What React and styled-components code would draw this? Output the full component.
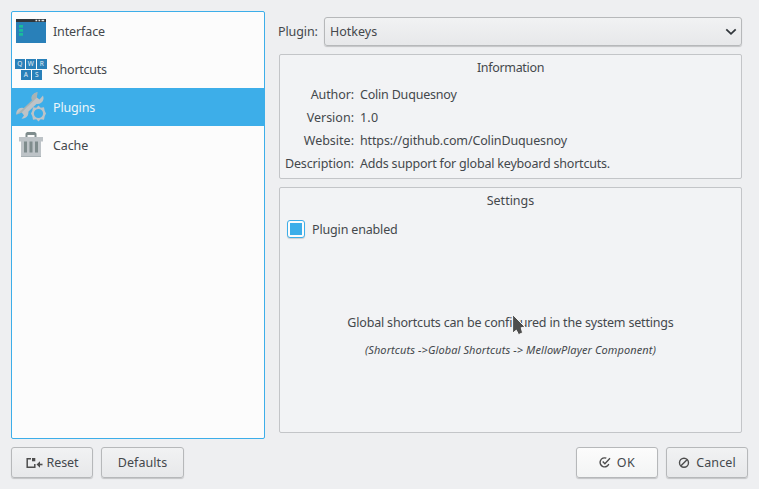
import React from "react";
import styled, { createGlobalStyle, css } from "styled-components";

const GlobalStyle = createGlobalStyle`
  * { box-sizing: border-box; }
  body {
    margin: 0;
    background: #eeeff1;
    color: #44484c;
    font: 12.5px/20px "Noto Sans", "Open Sans", sans-serif;
    overflow: hidden;
  }
`;

const Dialog = styled.main`
  width: 759px;
  height: 489px;
  padding: 11px;
  display: flex;
  flex-direction: column;
  gap: 8px;
`;

const Content = styled.div`
  display: flex;
  height: 428px;
  gap: 13px;
`;

const CategoryList = styled.nav`
  width: 254px;
  height: 428px;
  flex: none;
  background: #fcfcfc;
  border: 1px solid #3daee9;
  border-radius: 2px;
`;

const Category = styled.div`
  display: flex;
  align-items: center;
  gap: 6px;
  height: 38px;
  padding-left: 3px;
  background: ${(p) => (p.$selected ? "#3daee9" : "transparent")};
  color: ${(p) => (p.$selected ? "#eef6fa" : "inherit")};
  svg { flex: none; display: block; }
  span { padding-top: 2px; }
`;

const Text = styled.span`
  white-space: nowrap;
  letter-spacing: ${(p) => p.$spacing || 0}px;
`;

const Page = styled.section`
  width: 464px;
  padding-top: 6px;
  display: flex;
  flex-direction: column;
`;

const PluginRow = styled.div`
  display: flex;
  justify-content: space-between;
  align-items: center;
  height: 29px;
`;

const raised = css`
  border: 1px solid #b6b8ba;
  border-radius: 3px;
  background: linear-gradient(#f1f2f3, #e7e8ea);
  box-shadow: 0 1px 1px rgba(0, 0, 0, 0.18);
`;

const ComboBox = styled.div`
  ${raised}
  width: 418px;
  height: 29px;
  padding: 0 4px 0 5px;
  display: flex;
  align-items: center;
  justify-content: space-between;
`;

const Group = styled.section`
  width: 463px;
  height: ${(p) => p.$height}px;
  margin: 8px 0 0 1px;
  padding-top: 3px;
  border: 1px solid #c3c5c8;
  border-radius: 2px;
  background: #f2f3f5;
`;

const GroupTitle = styled.h2`
  margin: 0;
  font: inherit;
  text-align: center;
`;

const Fields = styled.dl`
  display: grid;
  grid-template-columns: 74px 1fr;
  column-gap: 6px;
  grid-auto-rows: 23px;
  margin: 5px 0 0;
  line-height: 23px;
`;

const FieldName = styled.dt`
  text-align: right;
`;

const FieldValue = styled.dd`
  margin: 0;
`;

const CheckRow = styled.div`
  display: flex;
  align-items: center;
  gap: 7px;
  height: 20px;
  margin: 8px 0 0 7px;
  ${Text} { padding-top: 2px; }
`;

const CheckBox = styled.span`
  width: 18px;
  height: 18px;
  padding: 2px;
  border: 1px solid #3daee9;
  border-radius: 3px;
  background: #fcfcfc;
  box-shadow: 0 1px 1px rgba(0, 0, 0, 0.15);
  &::before {
    content: "";
    display: block;
    width: 12px;
    height: 12px;
    background: #3daee9;
  }
`;

const Hint = styled.div`
  position: relative;
  display: flex;
  flex-direction: column;
  align-items: center;
  margin-top: 74px;
`;

const HintDetail = styled.div`
  margin-top: 7px;
  font-size: 11px;
  line-height: 19px;
  font-style: italic;
`;

const Pointer = styled.svg`
  position: absolute;
  left: 230px;
  top: 0;
`;

const ButtonBar = styled.footer`
  display: flex;
  gap: 8px;
  height: 32px;
`;

const Spacer = styled.div`
  flex: 1;
`;

const Button = styled.button`
  ${raised}
  ${(p) => p.$bright && css`background: linear-gradient(#fcfcfc, #f3f4f4);`}
  width: ${(p) => p.$width || 82}px;
  height: 31px;
  padding: 0;
  display: flex;
  align-items: center;
  justify-content: center;
  gap: ${(p) => p.$gap || 0}px;
  font: inherit;
  color: inherit;
`;

const KeyLabel = styled.text`
  font: 6.5px "Noto Sans", sans-serif;
  fill: #e4eff6;
  text-anchor: middle;
`;

const WindowIcon = () => (
  <svg width="32" height="32" viewBox="0 0 32 32">
    <path fill="#2980b9" d="M1 4h30v24H1z" />
    <path fill="#31363b" d="M1 4h30v3H1z" />
    <path fill="#e8eaeb" d="M20.5 4.7h1.7v1.5h-1.7zM23.5 4.7h1.7v1.5h-1.7zM26.5 4.7h2.7v1.5h-2.7z" />
    <path fill="#1abc9c" d="M4 10h4v2.7H4zM4 14h4v2.7H4zM4 18h4v2.7H4z" />
  </svg>
);

const KEYS = [["Q", 0, 6], ["W", 11, 6], ["R", 22, 6], ["A", 6, 17], ["S", 17, 17]];

const KeysIcon = () => (
  <svg width="32" height="32" viewBox="0 0 32 32">
    {KEYS.map(([k, x, y]) => (
      <g key={k}>
        <rect x={x} y={y} width="10" height="10" fill="#2980b9" />
        <KeyLabel x={x + 4.8} y={y + 7}>{k}</KeyLabel>
      </g>
    ))}
  </svg>
);

const ToolsIcon = () => (
  <svg width="32" height="32" viewBox="0 0 32 32">
    <path
      fill="#bdc3c7"
      d="M17 4.500Q18.800 1.500 22.500 1L21.800 6.500 24.500 8.500 28 4.500Q29.500 9 26.500 11.500 24.500 13.300 21.500 13L13.500 20.500Q13.500 25.500 10 27 8.500 27.700 6.500 27.800L9 24.500 6.800 21.500 1.200 23.800Q1 19.500 4 17.500 6 16.300 9 17L17 9.500Q16 6.500 17 4.500z"
    />
    <path fill="#95a5a6" fillOpacity=".55" d="M17 4.500Q18.800 1.500 22.500 1L21.800 6.500 17 11.500 11.500 16.500 6.800 21.500 1.200 23.800 17 9.500Q16 6.500 17 4.500z" />
    <path
      fill="#bdc3c7"
      fillRule="evenodd"
      d="m23.500 14.500 2.200 2.300 3.300-.5.700 3.500 1.300 2.700-1.300 2.700-.7 3.500-3.300-.5-2.200 2.300-2.200-2.300-3.300.5-.7-3.500L16 22.500l1.300-2.700.7-3.500 3.300.5zm0 3.400a4.600 4.600 0 1 0 0 9.200 4.600 4.600 0 0 0 0-9.200z"
    />
  </svg>
);

const TrashIcon = () => (
  <svg width="32" height="32" viewBox="0 0 32 32">
    <path fill="#7f8c8d" d="M10.500 6V4.500L12 3h8l1.500 1.500V8h-2V6h-7v2h-2z" />
    <path fill="#bdc3c7" d="M4 8h24v4.500h-2V27H6V12.500H4z" />
    <path fill="#a8b1b5" d="M6 27h20v1H6z" />
    <path fill="#7f8c8d" d="M9 12.500h3v11H9zM14.500 12.500h3v11h-3zM20 12.500h3v11h-3z" />
  </svg>
);

const ChevronIcon = () => (
  <svg width="12" height="8" viewBox="0 0 12 8" fill="none" stroke="#31363b" strokeWidth="1.800">
    <path d="m1.300 1.300 4.700 4.500 4.700-4.500" />
  </svg>
);

const ResetIcon = () => (
  <svg width="17" height="12" viewBox="0 0 17 12" fill="none" stroke="#4d4d4d">
    <path strokeWidth="1.500" d="M5 1.700H1.200v8.600h7.600V7" />
    <path fill="#4d4d4d" stroke="none" d="M6 1h3.300v3.300H6z" />
    <path strokeWidth="1.600" d="M16.500 7.500H12" />
    <path fill="#4d4d4d" stroke="none" d="M10.500 7.500 14 4.300v6.400z" />
  </svg>
);

const OkIcon = () => (
  <svg width="12" height="12" viewBox="0 0 12 12" fill="none" stroke="#4d4d4d" strokeWidth="1.400">
    <path d="M7.300 1.200A4.500 4.500 0 1 0 9.800 7" />
    <path d="m3.700 4.500 2.200 2.300L11 1.300" />
  </svg>
);

const CancelIcon = () => (
  <svg width="12" height="12" viewBox="0 0 12 12" fill="none" stroke="#4d4d4d" strokeWidth="1.400">
    <circle cx="6" cy="5.700" r="4.500" />
    <path d="m3 8.700 6-6" />
  </svg>
);

const CATEGORIES = [
  { name: "Interface", Icon: WindowIcon, spacing: -0.12 },
  { name: "Shortcuts", Icon: KeysIcon, spacing: -0.25 },
  { name: "Plugins", Icon: ToolsIcon, spacing: -0.15, selected: true },
  { name: "Cache", Icon: TrashIcon, spacing: -0.1 },
];

const FIELDS = [
  ["Author:", -0.1, "Colin Duquesnoy", -0.2],
  ["Version:", 0, "1.0", 0.2],
  ["Website:", 0, "https://github.com/ColinDuquesnoy", -0.13],
  ["Description:", -0.13, "Adds support for global keyboard shortcuts.", -0.2],
];

export default function App() {
  return (
    <>
      <GlobalStyle />
      <Dialog>
        <Content>
          <CategoryList>
            {CATEGORIES.map(({ name, Icon, spacing, selected }) => (
              <Category key={name} $selected={selected}>
                <Icon />
                <Text $spacing={spacing}>{name}</Text>
              </Category>
            ))}
          </CategoryList>
          <Page>
            <PluginRow>
              <Text $spacing={-0.1}>Plugin:</Text>
              <ComboBox>
                <Text>Hotkeys</Text>
                <ChevronIcon />
              </ComboBox>
            </PluginRow>
            <Group $height={125}>
              <GroupTitle><Text $spacing={-0.33}>Information</Text></GroupTitle>
              <Fields>
                {FIELDS.map(([name, nameSpacing, value, valueSpacing]) => (
                  <React.Fragment key={name}>
                    <FieldName><Text $spacing={nameSpacing}>{name}</Text></FieldName>
                    <FieldValue><Text $spacing={valueSpacing}>{value}</Text></FieldValue>
                  </React.Fragment>
                ))}
              </Fields>
            </Group>
            <Group $height={246}>
              <GroupTitle><Text>Settings</Text></GroupTitle>
              <CheckRow>
                <CheckBox role="checkbox" aria-checked="true" />
                <Text $spacing={-0.16}>Plugin enabled</Text>
              </CheckRow>
              <Hint>
                <Text $spacing={-0.185}>Global shortcuts can be configured in the system settings</Text>
                <HintDetail>
                  <Text $spacing={0.1}>{"(Shortcuts ->Global Shortcuts -> MellowPlayer Component)"}</Text>
                </HintDetail>
                <Pointer width="18" height="26" viewBox="0 0 18 26">
                  <path
                    d="M2.600 1.500 15 14l-3.800.7 1.400 5-4 2-2.300-4.500-3.700 3z"
                    fill="#4d4d4d"
                    stroke="#fafafa"
                    strokeWidth="1"
                  />
                </Pointer>
              </Hint>
            </Group>
          </Page>
        </Content>
        <ButtonBar>
          <Button $gap={4}><ResetIcon /><Text $spacing={-0.1}>Reset</Text></Button>
          <Button $width={83}><Text $spacing={0.05}>Defaults</Text></Button>
          <Spacer />
          <Button $bright $gap={6}><OkIcon /><Text $spacing={0.5}>OK</Text></Button>
          <Button $gap={6}><CancelIcon /><Text $spacing={0.1}>Cancel</Text></Button>
        </ButtonBar>
      </Dialog>
    </>
  );
}
